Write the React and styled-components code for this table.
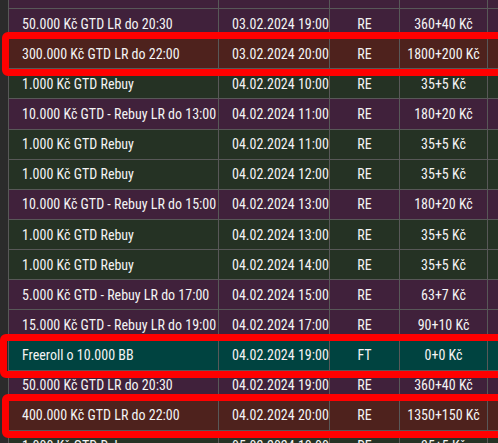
import React from 'react';
import styled, { createGlobalStyle, css } from 'styled-components';

const Global = createGlobalStyle`
  html, body {
    margin: 0;
    background: #2b2b2b;
    overflow: hidden;
  }
`;

const tones = {
  purple: '#40213b',
  green: '#253224',
  red: '#4e221d',
  teal: '#004340',
};

const Page = styled.div`
  display: flex;
  height: 443px;
  overflow: hidden;
  background: #2b2b2b;
`;

const Gutter = styled.div`
  width: 8px;
  flex: none;
  background: #2b2b2b;
`;

const Table = styled.div`
  flex: 1;
  margin-top: -22.15px;
  border-left: 1px solid #585858;
  font-family: 'Roboto Condensed', Roboto, 'Liberation Sans Narrow', sans-serif;
  font-stretch: condensed;
  font-size: 14px;
  color: #f4f4f4;
`;

const Row = styled.div`
  display: grid;
  grid-template-columns: 210px 111px 70px 88px 1fr;
  height: 30.15px;
  box-sizing: border-box;
  border-top: 1px solid #585858;
  background: ${(p) => tones[p.$tone]};

  ${(p) =>
    p.$mark &&
    css`
      position: relative;

      &::after {
        content: '';
        position: absolute;
        top: -7px;
        bottom: -8px;
        left: ${p.$wide ? '-9px' : '-7px'};
        right: 3px;
        border: 7px solid #ff0000;
        border-radius: 6px;
        pointer-events: none;
        z-index: 1;
      }
    `}
`;

const Cell = styled.div`
  display: flex;
  align-items: center;
  justify-content: ${(p) => (p.$center ? 'center' : 'flex-start')};
  padding: 0 ${(p) => (p.$center ? '0' : '13px')};
  border-right: 1px solid #585858;
  white-space: nowrap;
  overflow: hidden;

  &:last-child {
    border-right: none;
  }
`;

const rows = [
  ['', '', '', '', 'purple'],
  ['50.000 Kč GTD LR do 20:30', '03.02.2024 19:00', 'RE', '360+40 Kč', 'purple'],
  ['300.000 Kč GTD LR do 22:00', '03.02.2024 20:00', 'RE', '1800+200 Kč', 'red', true],
  ['1.000 Kč GTD Rebuy', '04.02.2024 10:00', 'RE', '35+5 Kč', 'green'],
  ['10.000 Kč GTD - Rebuy LR do 13:00', '04.02.2024 11:00', 'RE', '180+20 Kč', 'purple'],
  ['1.000 Kč GTD Rebuy', '04.02.2024 11:00', 'RE', '35+5 Kč', 'green'],
  ['1.000 Kč GTD Rebuy', '04.02.2024 12:00', 'RE', '35+5 Kč', 'green'],
  ['10.000 Kč GTD - Rebuy LR do 15:00', '04.02.2024 13:00', 'RE', '180+20 Kč', 'purple'],
  ['1.000 Kč GTD Rebuy', '04.02.2024 13:00', 'RE', '35+5 Kč', 'green'],
  ['1.000 Kč GTD Rebuy', '04.02.2024 14:00', 'RE', '35+5 Kč', 'green'],
  ['5.000 Kč GTD - Rebuy LR do 17:00', '04.02.2024 15:00', 'RE', '63+7 Kč', 'purple'],
  ['15.000 Kč GTD - Rebuy LR do 19:00', '04.02.2024 17:00', 'RE', '90+10 Kč', 'purple'],
  ['Freeroll o 10.000 BB', '04.02.2024 19:00', 'FT', '0+0 Kč', 'teal', true, true],
  ['50.000 Kč GTD LR do 20:30', '04.02.2024 19:00', 'RE', '360+40 Kč', 'purple'],
  ['400.000 Kč GTD LR do 22:00', '04.02.2024 20:00', 'RE', '1350+150 Kč', 'red', true],
  ['1.000 Kč GTD Rebuy', '05.02.2024 10:00', 'RE', '35+5 Kč', 'green'],
];

export default function App() {
  return (
    <>
      <Global />
      <Page>
        <Gutter />
        <Table>
          {rows.map(([name, date, type, buyin, tone, mark, wide], i) => (
            <Row key={i} $tone={tone} $mark={mark} $wide={wide}>
              <Cell>{name}</Cell>
              <Cell>{date}</Cell>
              <Cell $center>{type}</Cell>
              <Cell $center>{buyin}</Cell>
              <Cell />
            </Row>
          ))}
        </Table>
      </Page>
    </>
  );
}
